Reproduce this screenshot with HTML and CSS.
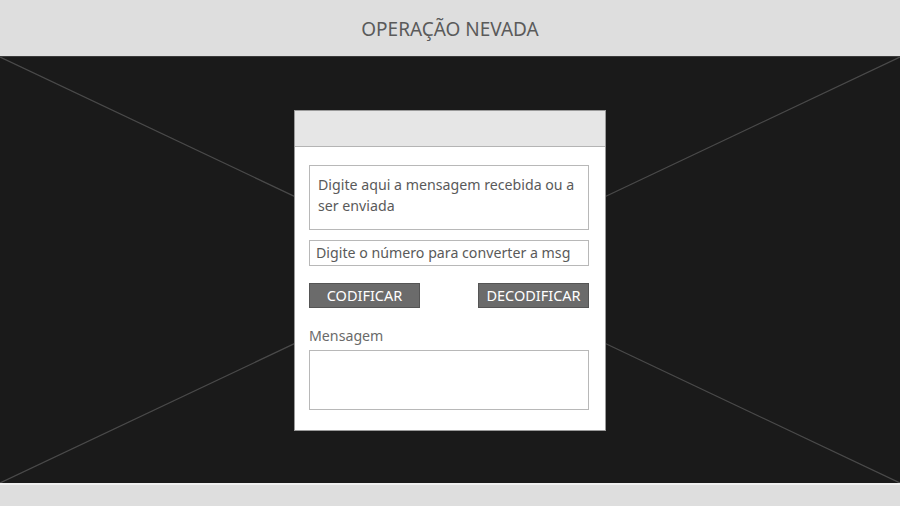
FILE: index.html
```html
<!DOCTYPE html>
<html lang="pt">
<head>
<meta charset="utf-8">
<title>Operação Nevada</title>
<link rel="stylesheet" href="styles.css">
</head>
<body>
<header class="topbar">
  <h1 class="title">OPERAÇÃO NEVADA</h1>
</header>
<main class="stage">
  <svg class="xlines" viewBox="0 0 900 427" preserveAspectRatio="none" aria-hidden="true">
    <line x1="0" y1="0" x2="900" y2="427" />
    <line x1="0" y1="427" x2="900" y2="0" />
  </svg>
  <section class="card">
    <div class="card-head"></div>
    <div class="card-body">
      <div class="field field-big">Digite aqui a mensagem recebida ou a ser enviada</div>
      <div class="field field-line">Digite o número para converter a msg</div>
      <div class="actions">
        <button class="btn">CODIFICAR</button>
        <button class="btn">DECODIFICAR</button>
      </div>
      <div class="label">Mensagem</div>
      <div class="field field-out"></div>
    </div>
  </section>
</main>
<footer class="bottombar"></footer>
</body>
</html>
```
FILE: styles.css
```css
* { box-sizing: border-box; }
html, body { margin: 0; padding: 0; }
body {
  width: 900px;
  height: 506px;
  overflow: hidden;
  font-family: "Noto Sans", "Open Sans", sans-serif;
  background: #dedede;
  display: flex;
  flex-direction: column;
}
.topbar {
  height: 56px;
  background: #dedede;
  display: flex;
  align-items: center;
  justify-content: center;
}
.title {
  margin: 0;
  font-weight: 400;
  font-size: 19px;
  color: #5a5a5a;
  letter-spacing: 0;
  padding-top: 2px;
}
.stage {
  position: relative;
  height: 427px;
  background: #1a1a1a;
  border-top: 1px solid #3a3a3a;
  display: flex;
  align-items: center;
  justify-content: center;
}
.xlines {
  position: absolute;
  inset: 0;
  width: 100%;
  height: 100%;
}
.xlines line {
  stroke: #4a4a4a;
  stroke-width: 1.2;
  vector-effect: non-scaling-stroke;
}
.card {
  position: relative;
  width: 312px;
  height: 321px;
  background: #fff;
  border: 1px solid #9a9a9a;
  display: flex;
  flex-direction: column;
}
.card-head {
  height: 36px;
  background: #e6e6e6;
  border-bottom: 1px solid #b4b4b4;
}
.card-body {
  padding: 18px 16px 0 14px;
  display: flex;
  flex-direction: column;
}
.field {
  border: 1px solid #b8b8b8;
  background: #fff;
  color: #5a5a5a;
  font-size: 14.2px;
}
.field-big {
  height: 65px;
  padding: 8px 8px 0 8px;
  line-height: 21px;
}
.field-line {
  margin-top: 10px;
  height: 26px;
  padding: 0 6px;
  line-height: 24px;
  white-space: nowrap;
}
.actions {
  margin-top: 17px;
  display: flex;
  justify-content: space-between;
}
.btn {
  width: 111px;
  height: 25px;
  border: 1px solid #555;
  background: #6b6b6b;
  color: #fff;
  font-family: inherit;
  font-size: 14.5px;
  padding: 0;
  line-height: 22px;
}
.label {
  margin-top: 18px;
  font-size: 14.2px;
  color: #6a6a6a;
  line-height: 20px;
}
.field-out {
  margin-top: 4px;
  height: 60px;
}
.bottombar {
  flex: 1;
  background: #dedede;
  border-top: 2px solid #f0f0f0;
}
```
